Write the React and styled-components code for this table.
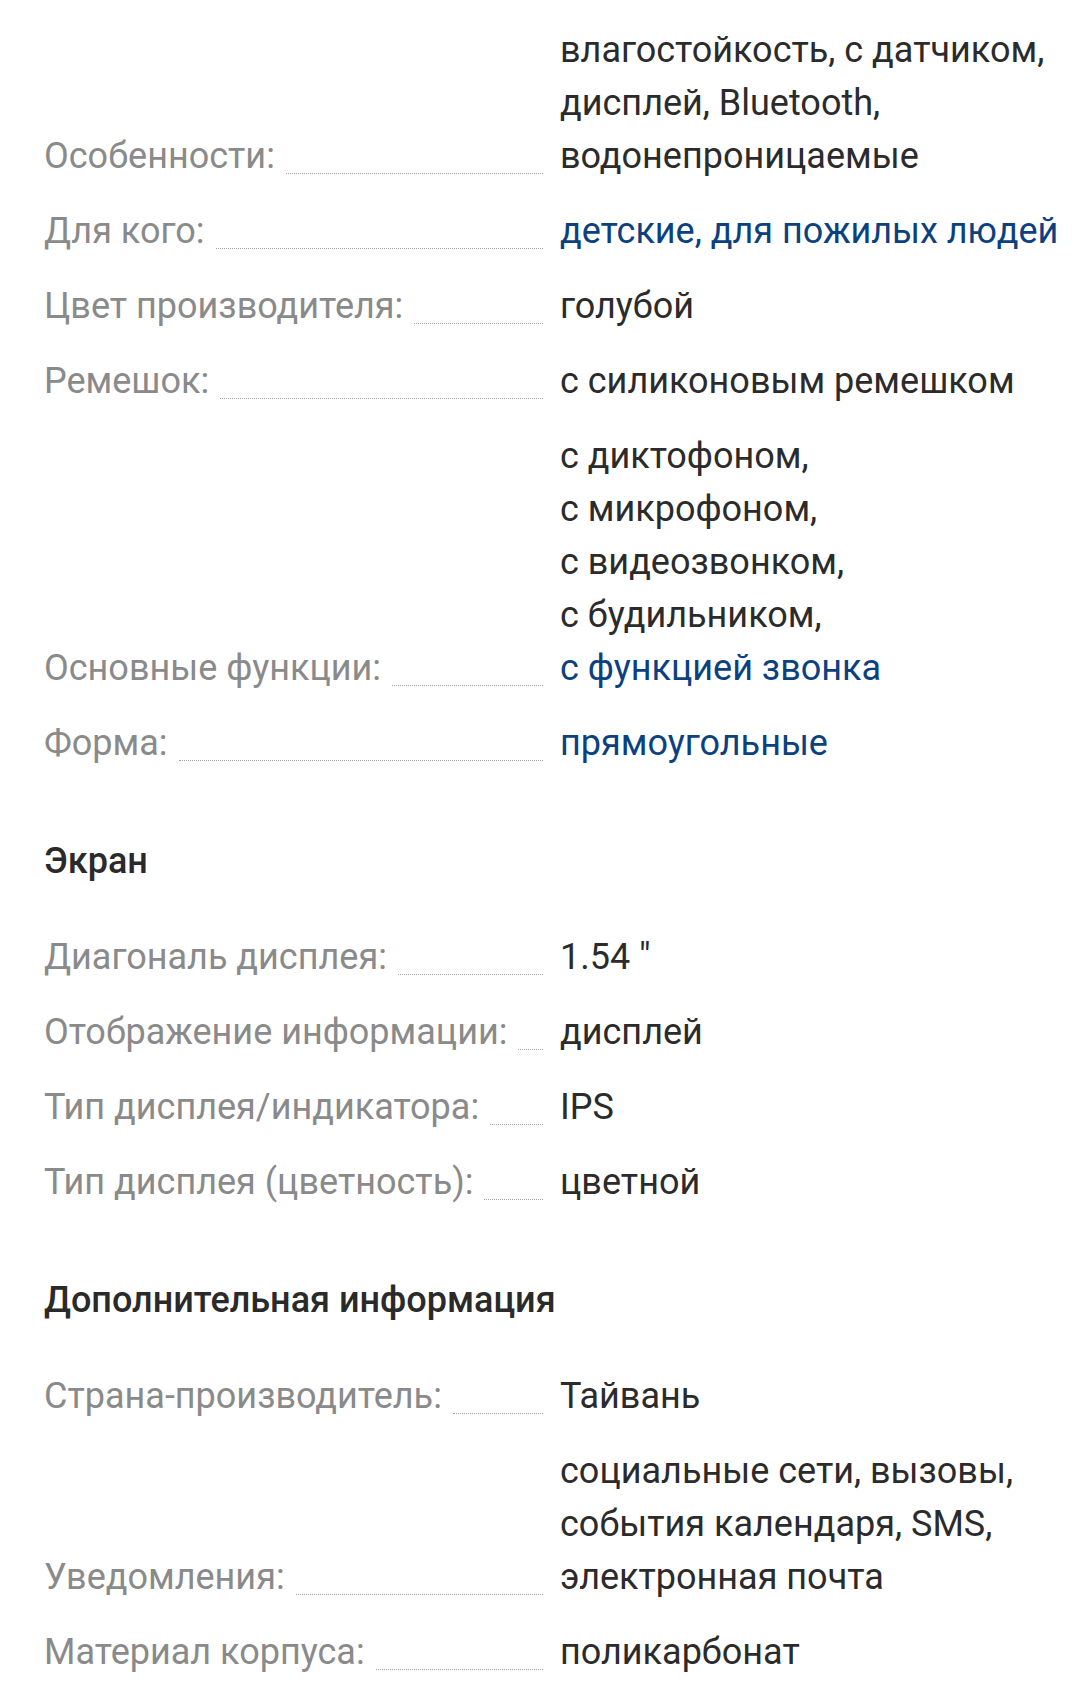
import styled, { createGlobalStyle } from "styled-components";

const GlobalStyle = createGlobalStyle`
  body {
    margin: 0;
    background: #ffffff;
    font-family: Roboto, "Noto Sans", sans-serif;
  }
`;

const sections = [
  {
    rows: [
      {
        label: "Особенности:",
        value: ["влагостойкость, с датчиком,", "дисплей, Bluetooth,", "водонепроницаемые"],
      },
      { label: "Для кого:", value: ["детские, для пожилых людей"], link: true },
      { label: "Цвет производителя:", value: ["голубой"] },
      { label: "Ремешок:", value: ["с силиконовым ремешком"] },
      {
        label: "Основные функции:",
        value: ["с диктофоном,", "с микрофоном,", "с видеозвонком,", "с будильником,"],
        tail: "с функцией звонка",
      },
      { label: "Форма:", value: ["прямоугольные"], link: true },
    ],
  },
  {
    title: "Экран",
    rows: [
      { label: "Диагональ дисплея:", value: ["1.54 \""] },
      { label: "Отображение информации:", value: ["дисплей"] },
      { label: "Тип дисплея/индикатора:", value: ["IPS"] },
      { label: "Тип дисплея (цветность):", value: ["цветной"] },
    ],
  },
  {
    title: "Дополнительная информация",
    rows: [
      { label: "Страна-производитель:", value: ["Тайвань"] },
      {
        label: "Уведомления:",
        value: ["социальные сети, вызовы,", "события календаря, SMS,", "электронная почта"],
      },
      { label: "Материал корпуса:", value: ["поликарбонат"] },
    ],
  },
];

const Page = styled.div`
  padding: 24px 16px 30px 44px;
  font-size: 36px;
  line-height: 53px;
`;

const Section = styled.section`
  margin-top: 65px;

  &:first-child {
    margin-top: 0;
  }
`;

const Title = styled.h3`
  margin: 0 0 43px;
  font-size: 36px;
  font-weight: 500;
  line-height: 53px;
  color: #2a2a2a;
`;

const Rows = styled.div`
  display: flex;
  flex-direction: column;
  gap: 22px;
`;

const Row = styled.div`
  display: grid;
  grid-template-columns: 499px 1fr;
  column-gap: 17px;
`;

const LabelCell = styled.div`
  display: flex;
  align-items: flex-end;
`;

const Label = styled.span`
  white-space: nowrap;
  color: #8a8a8a;
`;

const Dots = styled.span`
  flex: 1;
  min-width: 14px;
  margin: 0 0 9px 11px;
  border-bottom: 1px dotted #a0a0a0;
`;

const Value = styled.div`
  color: ${(p) => (p.$link ? "#0c417f" : "#2b2b2b")};
`;

const Line = styled.div`
  white-space: nowrap;
  color: ${(p) => (p.$link ? "#0c417f" : "inherit")};
`;

export default function App() {
  return (
    <>
      <GlobalStyle />
      <Page>
        {sections.map((section, i) => (
          <Section key={i}>
            {section.title && <Title>{section.title}</Title>}
            <Rows>
              {section.rows.map((row) => (
                <Row key={row.label}>
                  <LabelCell>
                    <Label>{row.label}</Label>
                    <Dots />
                  </LabelCell>
                  <Value $link={row.link}>
                    {row.value.map((line) => (
                      <Line key={line}>{line}</Line>
                    ))}
                    {row.tail && <Line $link>{row.tail}</Line>}
                  </Value>
                </Row>
              ))}
            </Rows>
          </Section>
        ))}
      </Page>
    </>
  );
}
